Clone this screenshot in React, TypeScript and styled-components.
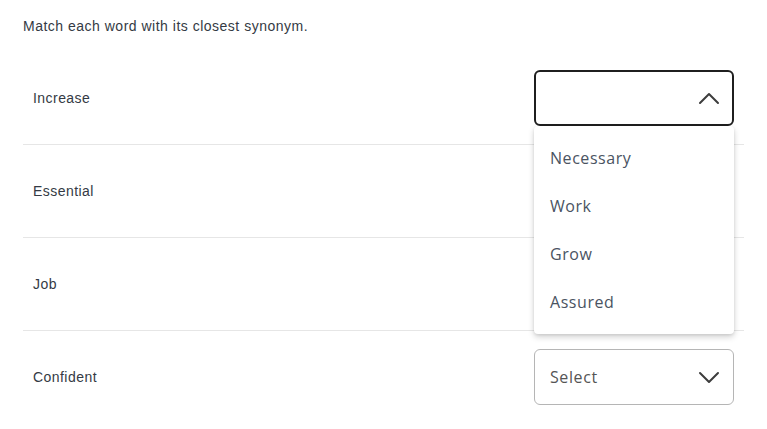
import { useState } from 'react';
import styled, { createGlobalStyle } from 'styled-components';

const words = ['Increase', 'Essential', 'Job', 'Confident'];
const options = ['Necessary', 'Work', 'Grow', 'Assured'];

function Chevron({ up }: { up?: boolean }) {
  return (
    <svg width="22" height="14" viewBox="0 0 22 14" fill="none">
      <path
        d={up ? 'M2 12 L11 3 L20 12' : 'M2 3 L11 12 L20 3'}
        stroke="#3d3d3d"
        strokeWidth="2"
        strokeLinecap="round"
        strokeLinejoin="round"
      />
    </svg>
  );
}

function App() {
  const [openRow] = useState(0);

  return (
    <>
      <GlobalStyle />
      <Page>
        <Instruction>Match each word with its closest synonym.</Instruction>
        <List>
          {words.map((word, i) => (
            <Row key={word} $last={i === words.length - 1}>
              <Word>{word}</Word>
              <SelectWrap>
                <SelectBox $open={openRow === i}>
                  <SelectText>{openRow === i ? '' : 'Select'}</SelectText>
                  <Chevron up={openRow === i} />
                </SelectBox>
                {openRow === i ? (
                  <Menu>
                    {options.map((opt) => (
                      <Option key={opt}>{opt}</Option>
                    ))}
                  </Menu>
                ) : null}
              </SelectWrap>
            </Row>
          ))}
        </List>
      </Page>
    </>
  );
}

export default App;

const GlobalStyle = createGlobalStyle`
  body {
    margin: 0;
    background: #fff;
    font-family: "Liberation Sans", Arial, sans-serif;
  }
`;

const Page = styled.div`
  padding: 0 23px;
`;

const Instruction = styled.p`
  margin: 0;
  padding-top: 16px;
  height: 36px;
  font-size: 14px;
  line-height: 20px;
  letter-spacing: 0.5px;
  color: #343a44;
`;

const List = styled.div`
  display: flex;
  flex-direction: column;
`;

const Row = styled.div<{ $last?: boolean }>`
  display: flex;
  align-items: center;
  justify-content: space-between;
  height: 92px;
  padding: 0 10px;
  border-bottom: ${(p) => (p.$last ? 'none' : '1px solid #e6e6e6')};
`;

const Word = styled.span`
  font-size: 14px;
  letter-spacing: 0.45px;
  color: #343a44;
`;

const SelectWrap = styled.div`
  position: relative;
  width: 200px;
`;

const SelectBox = styled.div<{ $open?: boolean }>`
  box-sizing: border-box;
  height: 56px;
  display: flex;
  align-items: center;
  justify-content: space-between;
  padding: ${(p) => (p.$open ? '0 12px 0 14px' : '0 13px 0 15px')};
  border: ${(p) => (p.$open ? '2px solid #1f1f1f' : '1px solid #b5b5b5')};
  border-radius: 6px;
  background: #fff;
`;

const SelectText = styled.span`
  font-family: "Open Sans", sans-serif;
  font-size: 16px;
  letter-spacing: 0.6px;
  color: #555555;
`;

const Menu = styled.div`
  position: absolute;
  top: 56px;
  left: 0;
  width: 200px;
  padding: 8px 0;
  background: #fff;
  border-radius: 4px;
  box-shadow: 0 3px 6px rgba(0, 0, 0, 0.18), 0 1px 3px rgba(0, 0, 0, 0.08);
  z-index: 10;
`;

const Option = styled.div`
  height: 48px;
  display: flex;
  align-items: center;
  padding-left: 16px;
  font-family: "Open Sans", sans-serif;
  font-size: 16px;
  letter-spacing: 0.55px;
  color: #4a5362;
`;
